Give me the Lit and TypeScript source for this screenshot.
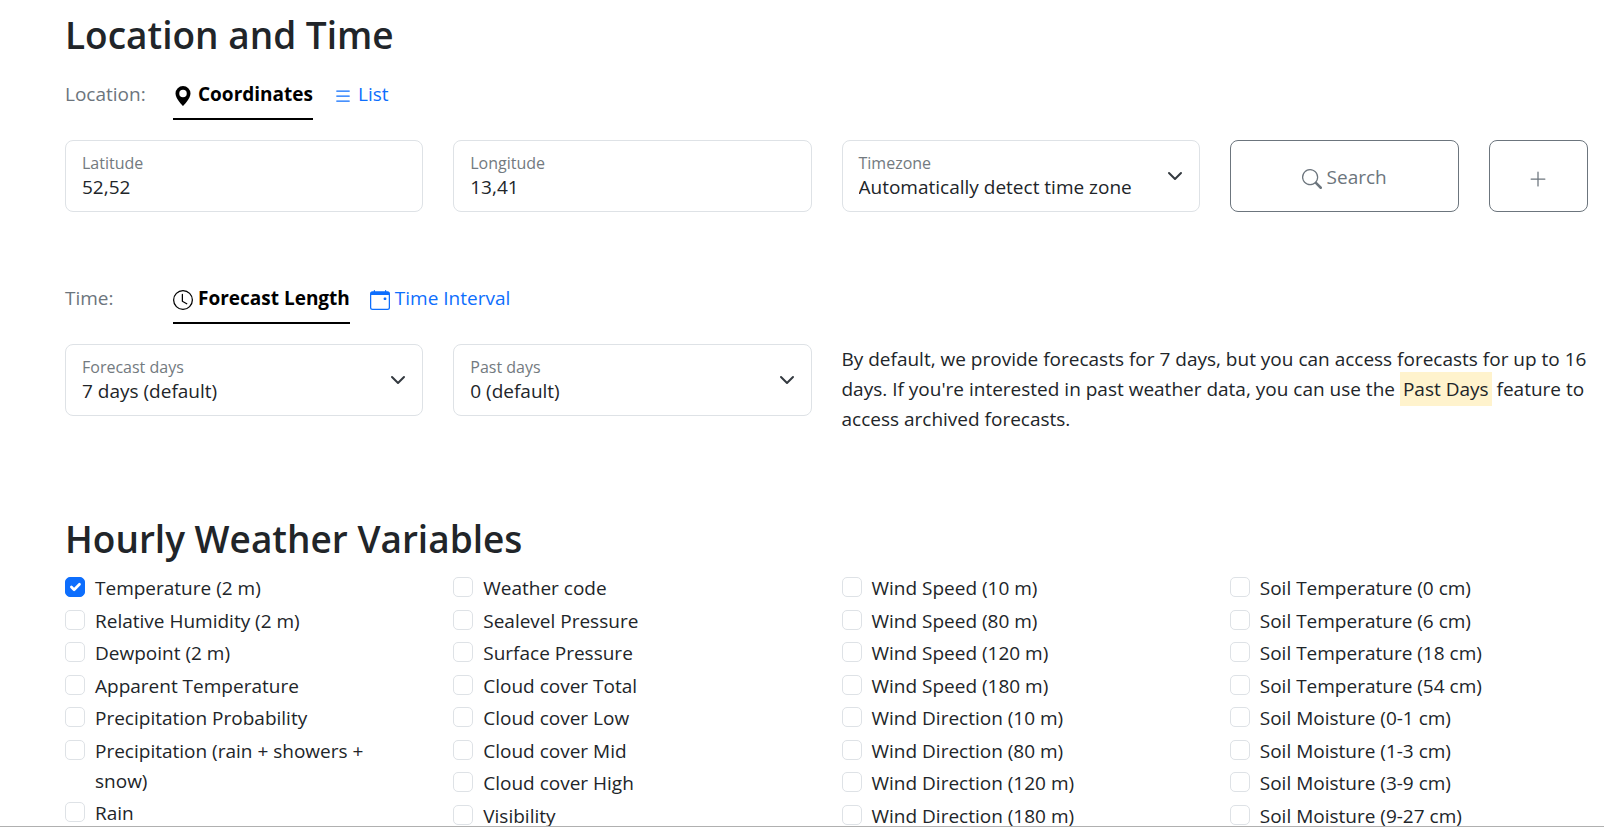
import { LitElement, html, css, svg } from "lit";
import { customElement, property, state } from "lit/decorators.js";

const icons = {
  pin: svg`<path d="M8 16s6-5.686 6-10A6 6 0 0 0 2 6c0 4.314 6 10 6 10m0-7a3 3 0 1 1 0-6 3 3 0 0 1 0 6"/>`,
  list: svg`<path fill-rule="evenodd" d="M2.5 12a.5.5 0 0 1 .5-.5h10a.5.5 0 0 1 0 1H3a.5.5 0 0 1-.5-.5m0-4a.5.5 0 0 1 .5-.5h10a.5.5 0 0 1 0 1H3a.5.5 0 0 1-.5-.5m0-4a.5.5 0 0 1 .5-.5h10a.5.5 0 0 1 0 1H3a.5.5 0 0 1-.5-.5"/>`,
  clock: svg`<path d="M8 3.5a.5.5 0 0 0-1 0V9a.5.5 0 0 0 .252.434l3.5 2a.5.5 0 0 0 .496-.868L8 8.71z"/><path d="M8 16A8 8 0 1 0 8 0a8 8 0 0 0 0 16m7-8A7 7 0 1 1 1 8a7 7 0 0 1 14 0"/>`,
  calendar: svg`<path d="M11 6.5a.5.5 0 0 1 .5-.5h1a.5.5 0 0 1 .5.5v1a.5.5 0 0 1-.5.5h-1a.5.5 0 0 1-.5-.5z"/><path d="M3.5 0a.5.5 0 0 1 .5.5V1h8V.5a.5.5 0 0 1 1 0V1h1a2 2 0 0 1 2 2v11a2 2 0 0 1-2 2H2a2 2 0 0 1-2-2V3a2 2 0 0 1 2-2h1V.5a.5.5 0 0 1 .5-.5M1 4v10a1 1 0 0 0 1 1h12a1 1 0 0 0 1-1V4z"/>`,
  search: svg`<path d="M11.742 10.344a6.5 6.5 0 1 0-1.397 1.398h-.001q.044.06.098.115l3.85 3.85a1 1 0 0 0 1.415-1.414l-3.85-3.85a1 1 0 0 0-.115-.1zM12 6.5a5.5 5.5 0 1 1-11 0 5.5 5.5 0 0 1 11 0"/>`,
  plus: svg`<path fill-rule="evenodd" d="M8 2a.5.5 0 0 1 .5.5v5h5a.5.5 0 0 1 0 1h-5v5a.5.5 0 0 1-1 0v-5h-5a.5.5 0 0 1 0-1h5v-5A.5.5 0 0 1 8 2"/>`,
};

type IconName = keyof typeof icons;

const icon = (name: IconName) =>
  html`<svg class="icon" viewBox="0 0 16 16" fill="currentColor" aria-hidden="true">${icons[name]}</svg>`;

interface Variable {
  label: string;
  checked?: boolean;
}

const hourly: Variable[][] = [
  [
    { label: "Temperature (2 m)", checked: true },
    { label: "Relative Humidity (2 m)" },
    { label: "Dewpoint (2 m)" },
    { label: "Apparent Temperature" },
    { label: "Precipitation Probability" },
    { label: "Precipitation (rain + showers + snow)" },
    { label: "Rain" },
  ],
  [
    { label: "Weather code" },
    { label: "Sealevel Pressure" },
    { label: "Surface Pressure" },
    { label: "Cloud cover Total" },
    { label: "Cloud cover Low" },
    { label: "Cloud cover Mid" },
    { label: "Cloud cover High" },
    { label: "Visibility" },
  ],
  [
    { label: "Wind Speed (10 m)" },
    { label: "Wind Speed (80 m)" },
    { label: "Wind Speed (120 m)" },
    { label: "Wind Speed (180 m)" },
    { label: "Wind Direction (10 m)" },
    { label: "Wind Direction (80 m)" },
    { label: "Wind Direction (120 m)" },
    { label: "Wind Direction (180 m)" },
  ],
  [
    { label: "Soil Temperature (0 cm)" },
    { label: "Soil Temperature (6 cm)" },
    { label: "Soil Temperature (18 cm)" },
    { label: "Soil Temperature (54 cm)" },
    { label: "Soil Moisture (0-1 cm)" },
    { label: "Soil Moisture (1-3 cm)" },
    { label: "Soil Moisture (3-9 cm)" },
    { label: "Soil Moisture (9-27 cm)" },
  ],
];

const base = css`
  * {
    box-sizing: border-box;
  }
  .icon {
    width: 20px;
    height: 20px;
    flex: none;
  }
`;

@customElement("tab-bar")
class TabBar extends LitElement {
  @property() caption = "";
  @property({ attribute: false }) tabs: { icon: IconName; label: string }[] = [];
  @state() private current = 0;

  static styles = [
    base,
    css`
      :host {
        display: flex;
        align-items: flex-start;
      }
      .caption {
        width: 108px;
        padding-top: 11px;
        color: #6c757d;
      }
      .tabs {
        display: flex;
        gap: 20px;
      }
      .tab {
        display: flex;
        align-items: center;
        gap: 5px;
        padding: 11px 0 9px;
        border: 0;
        border-bottom: 2px solid transparent;
        background: none;
        font: inherit;
        color: #0d6efd;
        cursor: pointer;
      }
      .tab .icon {
        margin-top: 4px;
      }
      .active {
        border-color: #000;
        color: #000;
        font-weight: 700;
      }
    `,
  ];

  render() {
    return html`
      <span class="caption">${this.caption}</span>
      <div class="tabs" role="tablist" aria-label=${this.caption}>
        ${this.tabs.map(
          (t, i) => html`<button
            type="button"
            role="tab"
            class="tab ${i === this.current ? "active" : ""}"
            aria-selected=${i === this.current ? "true" : "false"}
            @click=${() => (this.current = i)}
          >${icon(t.icon)}<span>${t.label}</span></button>`
        )}
      </div>
    `;
  }
}

@customElement("form-field")
class FormField extends LitElement {
  @property() label = "";
  @property() value = "";
  @property({ attribute: false }) options?: string[];

  static styles = [
    base,
    css`
      :host {
        display: grid;
        align-self: start;
      }
      .label,
      .control {
        grid-area: 1 / 1;
      }
      .label {
        z-index: 1;
        align-self: start;
        justify-self: start;
        padding: 11px 17px 0;
        font-size: 16px;
        line-height: 24px;
        color: #737a80;
        pointer-events: none;
      }
      .control {
        width: 100%;
        height: 72px;
        margin: 0;
        padding: 32px 16px 10px;
        border: 1px solid #dee2e6;
        border-radius: 8px;
        background-color: #fff;
        font: inherit;
        line-height: 28px;
        color: #212529;
        appearance: none;
      }
      .select {
        padding-right: 45px;
        background-image: url("data:image/svg+xml,%3csvg xmlns='http://www.w3.org/2000/svg' viewBox='0 0 16 16'%3e%3cpath fill='none' stroke='%23343a40' stroke-linecap='round' stroke-linejoin='round' stroke-width='2' d='m2 5 6 6 6-6'/%3e%3c/svg%3e");
        background-repeat: no-repeat;
        background-position: right 16px center;
        background-size: 16px 16px;
      }
    `,
  ];

  render() {
    return html`
      <label class="label" for="control">${this.label}</label>
      ${this.options
        ? html`<select id="control" class="control select">
            ${this.options.map((o) => html`<option>${o}</option>`)}
          </select>`
        : html`<input id="control" class="control" type="text" inputmode="decimal" .value=${this.value} />`}
    `;
  }
}

@customElement("app-root")
class AppRoot extends LitElement {
  static styles = [
    base,
    css`
      :host {
        display: block;
        font-family: "Segoe UI", "Open Sans", "Noto Sans", sans-serif;
        font-size: 19px;
        line-height: 30px;
        color: #212529;
      }
      .page {
        height: calc(100vh - 1px);
        padding: 11px 16px 0 65px;
        border-bottom: 1px solid #b0b0b0;
        box-shadow: 0 1px #dddddd;
        background: #fff;
        overflow-y: auto;
        scrollbar-width: none;
      }
      .title {
        margin: 0;
        font-size: 37px;
        line-height: 48px;
        font-weight: 600;
      }
      .row {
        display: grid;
        grid-template-columns: repeat(12, minmax(0, 1fr));
        column-gap: 30px;
      }
      .tabs {
        margin: 9px 0 20px;
      }
      .time {
        margin-top: 60px;
      }
      .span3 {
        grid-column: span 3;
      }
      .span2 {
        grid-column: span 2;
      }
      .span6 {
        grid-column: span 6;
      }
      .button {
        display: flex;
        align-items: center;
        justify-content: center;
        gap: 5px;
        padding: 2px 0 0;
        border: 1px solid #6c757d;
        border-radius: 8px;
        background: #fff;
        font: inherit;
        color: #6c757d;
        cursor: pointer;
      }
      .button .icon {
        margin-top: 4px;
      }
      .note {
        margin: 0;
      }
      .mark {
        padding: 4px 3px;
        background: #fff3cd;
        color: inherit;
      }
      .hourly {
        margin: 81px 0 10px;
      }
      .list {
        margin: 0;
        padding: 0;
        list-style: none;
      }
      .check {
        display: flex;
        align-items: flex-start;
        gap: 10px;
        margin-bottom: 2px;
        padding-right: 20px;
      }
      .check:nth-child(odd) {
        margin-bottom: 3px;
      }
      .box {
        flex: none;
        width: 20px;
        height: 20px;
        margin: 4px 0 0;
        border: 1px solid #dee2e6;
        border-radius: 5px;
        background: #fff center / contain no-repeat;
        appearance: none;
      }
      .box:checked {
        border-color: #0d6efd;
        background-color: #0d6efd;
        background-image: url("data:image/svg+xml,%3csvg xmlns='http://www.w3.org/2000/svg' viewBox='0 0 20 20'%3e%3cpath fill='none' stroke='%23fff' stroke-linecap='round' stroke-linejoin='round' stroke-width='3' d='m6 10 3 3 6-6'/%3e%3c/svg%3e");
      }
    `,
  ];

  render() {
    return html`
      <main class="page">
        <h2 class="title">Location and Time</h2>
        <tab-bar
          class="tabs"
          caption="Location:"
          .tabs=${[
            { icon: "pin", label: "Coordinates" },
            { icon: "list", label: "List" },
          ]}
        ></tab-bar>
        <div class="row">
          <form-field class="span3" label="Latitude" value="52,52"></form-field>
          <form-field class="span3" label="Longitude" value="13,41"></form-field>
          <form-field class="span3" label="Timezone" .options=${["Automatically detect time zone"]}></form-field>
          <button type="button" class="button span2">${icon("search")}<span>Search</span></button>
          <button type="button" class="button" aria-label="Add coordinates">${icon("plus")}</button>
        </div>

        <tab-bar
          class="tabs time"
          caption="Time:"
          .tabs=${[
            { icon: "clock", label: "Forecast Length" },
            { icon: "calendar", label: "Time Interval" },
          ]}
        ></tab-bar>
        <div class="row">
          <form-field class="span3" label="Forecast days" .options=${["7 days (default)"]}></form-field>
          <form-field class="span3" label="Past days" .options=${["0 (default)"]}></form-field>
          <p class="note span6">
            By default, we provide forecasts for 7 days, but you can access forecasts for up to 16 days. If you're
            interested in past weather data, you can use the <mark class="mark">Past Days</mark> feature to access
            archived forecasts.
          </p>
        </div>

        <h2 class="title hourly">Hourly Weather Variables</h2>
        <div class="row">
          ${hourly.map(
            (column, c) => html`<ul class="list span3">
              ${column.map(
                (v, i) => html`<li class="check">
                  <input class="box" type="checkbox" id="v${c}-${i}" .checked=${!!v.checked} />
                  <label for="v${c}-${i}">${v.label}</label>
                </li>`
              )}
            </ul>`
          )}
        </div>
      </main>
    `;
  }
}
